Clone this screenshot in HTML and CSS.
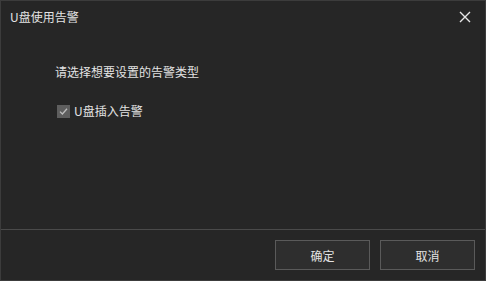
FILE: index.html
```html
<!DOCTYPE html>
<html lang="zh-CN">
<head>
<meta charset="utf-8">
<link rel="stylesheet" href="styles.css">
</head>
<body>
<div class="dialog">
  <div class="titlebar">
    <span class="title">U盘使用告警</span>
    <span class="close"><svg width="12" height="12" viewBox="0 0 12 12"><path d="M1 1L11 11M11 1L1 11" stroke="#e6e6e6" stroke-width="1.4" fill="none"/></svg></span>
  </div>
  <div class="content">
    <div class="prompt">请选择想要设置的告警类型</div>
    <label class="option">
      <span class="box"><svg width="11" height="11" viewBox="0 0 11 11"><path d="M2 5.6L4.4 8L9 2.8" stroke="#bdbdbd" stroke-width="1.3" fill="none"/></svg></span>
      <span class="label">U盘插入告警</span>
    </label>
  </div>
  <div class="footer">
    <button class="btn">确定</button>
    <button class="btn">取消</button>
  </div>
</div>
</body>
</html>
```
FILE: styles.css
```css
html, body {
  margin: 0;
  padding: 0;
  background: #262626;
}
body {
  font-family: "Noto Sans CJK SC", "Microsoft YaHei", sans-serif;
  font-size: 12px;
  color: #e3e3e3;
}
.dialog {
  width: 486px;
  height: 281px;
  box-sizing: border-box;
  border: 1px solid #3c3c3c;
  background: #262626;
  display: flex;
  flex-direction: column;
}
.titlebar {
  height: 32px;
  display: flex;
  align-items: center;
  justify-content: space-between;
  padding: 0 14px 0 9px;
}
.title {
  font-size: 12px;
  line-height: 16px;
  margin-top: -1px;
}
.close {
  display: flex;
  width: 12px;
  height: 12px;
}
.content {
  flex: 1;
  padding: 31px 0 0 54px;
}
.prompt {
  line-height: 16px;
}
.option {
  display: flex;
  align-items: center;
  margin-top: 23px;
  margin-left: 2px;
}
.box {
  width: 13px;
  height: 13px;
  background: #5e5e5e;
  display: flex;
  align-items: center;
  justify-content: center;
  margin-right: 4px;
}
.label {
  line-height: 16px;
}
.footer {
  height: 51px;
  border-top: 1px solid #4a4a4a;
  display: flex;
  align-items: flex-start;
  justify-content: flex-end;
  gap: 10px;
  padding: 10px 10px 0 0;
  box-sizing: border-box;
}
.btn {
  width: 95px;
  height: 30px;
  background: #2e2e2e;
  border: 1px solid #5a5a5a;
  color: #e3e3e3;
  font-family: inherit;
  font-size: 12px;
  padding: 0;
}
```
